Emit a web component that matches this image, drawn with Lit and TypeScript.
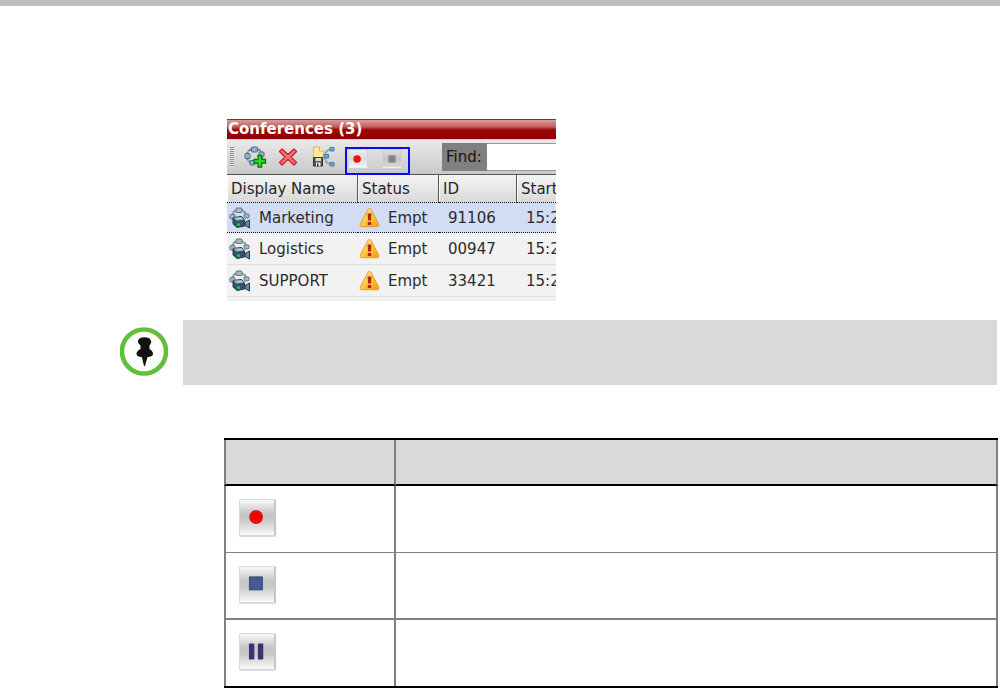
import { LitElement, html, css, svg } from "lit";
import { customElement } from "lit/decorators.js";

interface Conference {
  name: string;
  status: string;
  id: string;
  start: string;
}

const conferences: Conference[] = [
  { name: "Marketing", status: "Empt", id: "91106", start: "15:2" },
  { name: "Logistics", status: "Empt", id: "00947", start: "15:2" },
  { name: "SUPPORT", status: "Empt", id: "33421", start: "15:2" },
];

const ring = svg`
  <ellipse cx="10.500" cy="10" rx="8" ry="7.500" fill="none" stroke="#8fb5b0" stroke-width="2"/>
  <ellipse cx="10.500" cy="10" rx="8" ry="7.500" fill="none" stroke="#5d7878" stroke-width="1.200" stroke-dasharray="3 2"/>
  <g fill="#8db4dc" stroke="#5a6870" stroke-width="1">
    <rect x="7.500" y="1" width="6" height="5" rx="1"/>
    <rect x="1" y="7.500" width="5" height="5" rx="1"/>
    <rect x="15" y="6" width="5" height="5" rx="1"/>
  </g>`;

const addIcon = html`<svg width="24" height="22" viewBox="0 0 24 22" aria-hidden="true">
  ${ring}
  <rect x="6" y="14.500" width="5" height="4.500" rx="1" fill="#8db4dc" stroke="#5a6870"/>
  <path d="M14 9.500h3.500v4h4v3.500h-4v4H14v-4h-4v-3.500h4z" fill="#35e428" stroke="#087808" stroke-width="1.300"/>
</svg>`;

const deleteIcon = html`<svg width="20" height="18" viewBox="0 0 20 18" aria-hidden="true">
  <path d="M4 1l6 5.500L16 1l2.500 2.500L13 9l5.500 5.500L16 17l-6-5.500L4 17l-2.500-2.500L7 9 1.500 3.500z" fill="#f07474" stroke="#cc2028" stroke-width="1.400" stroke-linejoin="round"/>
</svg>`;

const saveIcon = html`<svg width="23" height="22" viewBox="0 0 23 22" aria-hidden="true">
  <path d="M1.500 1h6l4 4v8h-10z" fill="#ffeaa0" stroke="#e5b24c"/>
  <path d="M7.500 1v4h4" fill="#fff6d0" stroke="#e5b24c"/>
  <path d="M19 3.500q-5 .5-5.500 4v6q.5 4 5.500 4.500" fill="none" stroke="#8aa9a6" stroke-width="2"/>
  <g fill="#66a8e4" stroke="#4b7ca8"><path d="M18 1.500h4v3.500h-4zM18 16.500h4V20h-4zM12 8.500h4.500V12H12z"/></g>
  <path d="M1.500 11.500h9v8.500h-9z" fill="#55554c" stroke="#33332c"/>
  <path d="M3.500 12h5.500v3H3.500z" fill="#dcdccb"/><path d="M4 16.500h4.500V20H4z" fill="#f4f4ea"/><path d="M5 17.500h1.500V20H5z" fill="#222"/>
</svg>`;

const conferenceIcon = html`<svg width="22" height="22" viewBox="0 0 22 22" aria-hidden="true">
  <path d="M3 10Q3.500 3 10 3t8 7" fill="none" stroke="#87aaa8" stroke-width="2"/>
  <path d="M3 9Q3.500 3 10 3t8 6" fill="none" stroke="#5a7676" stroke-width="1" stroke-dasharray="2 2"/>
  <g fill="#a9b9c4" stroke="#66747c"><rect x="7" y="1" width="6" height="4.500" rx="1"/><rect x="1" y="7.500" width="5" height="4.500" rx="1"/><rect x="15" y="7" width="5" height="4" rx="1"/></g>
  <path d="M4 10.500L12.500 9.500l3 3.500v6l-7.500 1.500-4-3.500z" fill="#36536a" stroke="#243c4c"/>
  <path d="M4.500 10.800l8-.8 2.300 2.500-7 1z" fill="#a9c3d5"/>
  <path d="M16 15.500l4.500-2.500v8L16 18.500z" fill="#5d87a8" stroke="#243c4c"/>
  <circle cx="9.500" cy="17.500" r="1.500" fill="#1fd43a"/>
</svg>`;

const warningIcon = html`<svg width="21" height="20" viewBox="0 0 21 20" role="img" aria-label="Warning">
  <defs><linearGradient id="w" x1="0" y1="0" x2="1" y2="1"><stop offset="0" stop-color="#fff0a8"/><stop offset=".5" stop-color="#ffc83c"/><stop offset="1" stop-color="#f59a10"/></linearGradient></defs>
  <path d="M10.500 .5q1.200 0 1.800 1.200l7.500 14.500q.8 2.500-1.500 2.500H2.700q-2.300 0-1.500-2.500L8.700 1.700q.6-1.200 1.800-1.200z" fill="url(#w)" stroke="#dda13c"/>
  <path d="M8.500 5.500h4l-.7 7H9.200zM8.800 14h3.400v3H8.800z" fill="#b32710"/>
</svg>`;

const pinIcon = html`<svg width="48" height="49" viewBox="0 0 48 49" role="img" aria-label="Note">
  <circle cx="24" cy="24.500" r="22" fill="#fff" stroke="#62bf3c" stroke-width="4.600"/>
  <path d="M20 11q4-1.500 9 0 3.500 3 1.500 6l-1 1.500v3.500q3.500 2 3.500 5 0 2.500-5.500 3L25 39h-1l-2.200-9q-5.300-.5-5.300-3 0-3 4-5v-3.500L19 17q-2.500-3 1-6z" fill="#121212"/>
</svg>`;

const recordGlyph = html`<svg viewBox="0 0 38 38" aria-hidden="true">
  <defs><radialGradient id="r"><stop offset=".6" stop-color="#f30000"/><stop offset="1" stop-color="#d82020"/></radialGradient></defs>
  <circle cx="18" cy="18.500" r="7.800" fill="url(#r)"/></svg>`;
const stopGlyph = html`<svg viewBox="0 0 38 38" aria-hidden="true">
  <rect x="10.500" y="10.500" width="14.500" height="14.500" fill="#445a91" stroke="#32487a"/></svg>`;
const pauseGlyph = html`<svg viewBox="0 0 38 38" aria-hidden="true">
  <rect x="10" y="10" width="6" height="18" rx="1" fill="#38346e"/><rect x="20" y="10" width="6" height="18" rx="1" fill="#38346e"/></svg>`;
const smallRecord = html`<svg viewBox="0 0 20 20" aria-hidden="true"><circle cx="9" cy="10" r="4.200" fill="#f01010"/></svg>`;
const smallStop = html`<svg viewBox="0 0 20 20" aria-hidden="true"><rect x="6" y="6" width="8" height="8" fill="#858585"/></svg>`;

@customElement("conference-panel")
class ConferencePanel extends LitElement {
  static styles = css`
    :host {
      display: block;
      overflow: hidden;
      font: 15px/20px "DejaVu Sans", sans-serif;
      color: #262626;
      background: #f2f2f2;
    }
    .title {
      box-sizing: border-box;
      height: 20px;
      margin: 0;
      padding-left: 1px;
      border-top: 1px solid #7d3434;
      font-size: 15px;
      line-height: 19px;
      font-weight: bold;
      color: #fff;
      background: linear-gradient(#dc9a9a, #c66060 35%, #9a0505 52%, #940000);
      white-space: nowrap;
    }
    .toolbar {
      box-sizing: border-box;
      display: flex;
      align-items: center;
      width: 480px;
      height: 36px;
      border-top: 1px solid #d8d3cd;
      border-bottom: 1px solid #555;
      background: linear-gradient(#e9e9e9, #c8c8c8);
    }
    .grip {
      width: 4px;
      height: 20px;
      margin: 0 10px 0 3px;
      background: repeating-linear-gradient(#969696 0 1px, #dedede 1px 2px);
    }
    button {
      padding: 0;
      border: 0;
      background: none;
    }
    button svg, td svg { display: block; }
    .tool { flex: none; }
    .tool + .tool { margin-left: 10px; }
    .tool + .save { margin-left: 14px; }
    .recording {
      position: relative;
      z-index: 1;
      flex: none;
      align-self: flex-end;
      box-sizing: border-box;
      display: flex;
      gap: 14px;
      width: 65px;
      height: 28px;
      margin: 0 32px -1px 10px;
      padding: 0 1px;
      border: 2px solid #0a0aec;
    }
    .mini {
      box-sizing: border-box;
      width: 20px;
      height: 19px;
      border: 1px solid #d2d2d2;
      border-bottom-color: #eee;
      background: linear-gradient(#dedede, #c6c6c6 50%, #d8d8d8);
    }
    .record { background: linear-gradient(#ededed, #dadada 50%, #f6f6f6); }
    .find {
      flex: none;
      box-sizing: border-box;
      width: 45px;
      height: 28px;
      padding-left: 4px;
      line-height: 28px;
      background: #808080;
      color: #151515;
    }
    .search {
      box-sizing: border-box;
      flex: 1;
      min-width: 0;
      height: 28px;
      border: solid #999;
      border-width: 1px 0;
      border-radius: 0;
      background: #fff;
      font: inherit;
    }
    table {
      width: 411px;
      table-layout: fixed;
      border-collapse: separate;
      border-spacing: 0;
    }
    .name { width: 131px; }
    .status { width: 81px; }
    .id { width: 78px; }
    th {
      box-sizing: border-box;
      height: 27px;
      padding: 0 3px;
      border-right: 1px solid #555;
      border-left: 1px solid #fafafa;
      text-align: left;
      font-weight: normal;
      background: linear-gradient(#f4f4f4, #d9d9d9);
    }
    td {
      box-sizing: border-box;
      height: 32px;
      padding: 0 0 0 9px;
      border-bottom: 1px solid #dedede;
      color: #2b2b2b;
    }
    .selected td {
      height: 31px;
      border-top: 1px dotted #111;
      border-bottom: 1px dotted #111;
      background: #d2dcf2;
    }
    td:first-child { padding-left: 2px; }
    td:nth-child(2) { padding-left: 1px; }
    .cell {
      display: flex;
      align-items: center;
      gap: 8px;
    }
    .spare { height: 4px; }
  `;

  render() {
    return html`
      <h2 class="title">Conferences (3)</h2>
      <div class="toolbar">
        <span class="grip"></span>
        <button class="tool" aria-label="New conference">${addIcon}</button>
        <button class="tool" aria-label="Delete">${deleteIcon}</button>
        <button class="tool save" aria-label="Save as template">${saveIcon}</button>
        <div class="recording">
          <button class="mini record" aria-label="Start recording">${smallRecord}</button>
          <button class="mini" aria-label="Stop recording">${smallStop}</button>
        </div>
        <label class="find" for="find">Find:</label>
        <input class="search" id="find" type="text" />
      </div>
      <table>
        <colgroup><col class="name" /><col class="status" /><col class="id" /><col /></colgroup>
        <thead><tr><th>Display Name</th><th>Status</th><th>ID</th><th>Start</th></tr></thead>
        <tbody>
          ${conferences.map((c, i) => html`
            <tr class=${i === 0 ? "selected" : ""}>
              <td><div class="cell">${conferenceIcon}${c.name}</div></td>
              <td><div class="cell">${warningIcon}${c.status}</div></td>
              <td>${c.id}</td>
              <td>${c.start}</td>
            </tr>`)}
        </tbody>
      </table>
      <div class="spare"></div>
    `;
  }
}

@customElement("app-root")
class AppRoot extends LitElement {
  static styles = css`
    :host {
      display: block;
      background: #fff;
      font-family: "DejaVu Sans", sans-serif;
    }
    .rule { height: 6px; background: #bfbfbf; }
    .content { padding: 113px 2px 0 120px; }
    .panel { width: 329px; margin-left: 107px; }
    .note {
      display: flex;
      align-items: flex-start;
      gap: 15px;
      margin: 19px 1px 53px 0;
    }
    .note svg { flex: none; display: block; padding-top: 7px; }
    .band { flex: 1; height: 65px; background: #d9d9d9; }
    .indent { padding-left: 104px; }
    .buttons {
      width: 100%;
      table-layout: fixed;
      border-collapse: separate;
      border-spacing: 0;
      border-top: 2px solid #000;
      border-bottom: 2px solid #000;
    }
    .buttons th, .buttons td {
      box-sizing: border-box;
      padding: 0 0 2px 13px;
      border-right: 2px solid #808080;
      text-align: left;
    }
    .buttons th:first-child, .buttons td:first-child { border-left: 2px solid #808080; }
    .buttons th {
      height: 46px;
      border-bottom: 2px solid #000;
      background: #d9d9d9;
    }
    .buttons td { height: 67px; border-bottom: 1px solid #808080; }
    .buttons .strong td { border-bottom-width: 2px; }
    .buttons tr:last-child td { height: 66px; border-bottom: 0; }
    .first { width: 172px; }
    .key {
      box-sizing: border-box;
      display: block;
      width: 37px;
      height: 38px;
      padding: 0;
      border: solid #dadada;
      border-width: 1px 2px 2px 1px;
      border-right-color: #c5c5c5;
      border-radius: 2px;
      background: linear-gradient(#f8f8f8, #c5c5c5 40%, #c9c9c9 58%, #fafafa);
    }
    .key svg { display: block; width: 100%; height: 100%; }
  `;

  render() {
    const keys = [
      { label: "Record", glyph: recordGlyph, row: "" },
      { label: "Stop", glyph: stopGlyph, row: "strong" },
      { label: "Pause", glyph: pauseGlyph, row: "" },
    ];
    return html`
      <div class="rule"></div>
      <main class="content">
        <conference-panel class="panel"></conference-panel>
        <div class="note">${pinIcon}<div class="band"></div></div>
        <div class="indent">
          <table class="buttons">
            <colgroup><col class="first" /><col /></colgroup>
            <thead><tr><th></th><th></th></tr></thead>
            <tbody>
              ${keys.map((k) => html`<tr class=${k.row}>
                <td><button class="key" aria-label=${k.label}>${k.glyph}</button></td><td></td>
              </tr>`)}
            </tbody>
          </table>
        </div>
      </main>
    `;
  }
}
